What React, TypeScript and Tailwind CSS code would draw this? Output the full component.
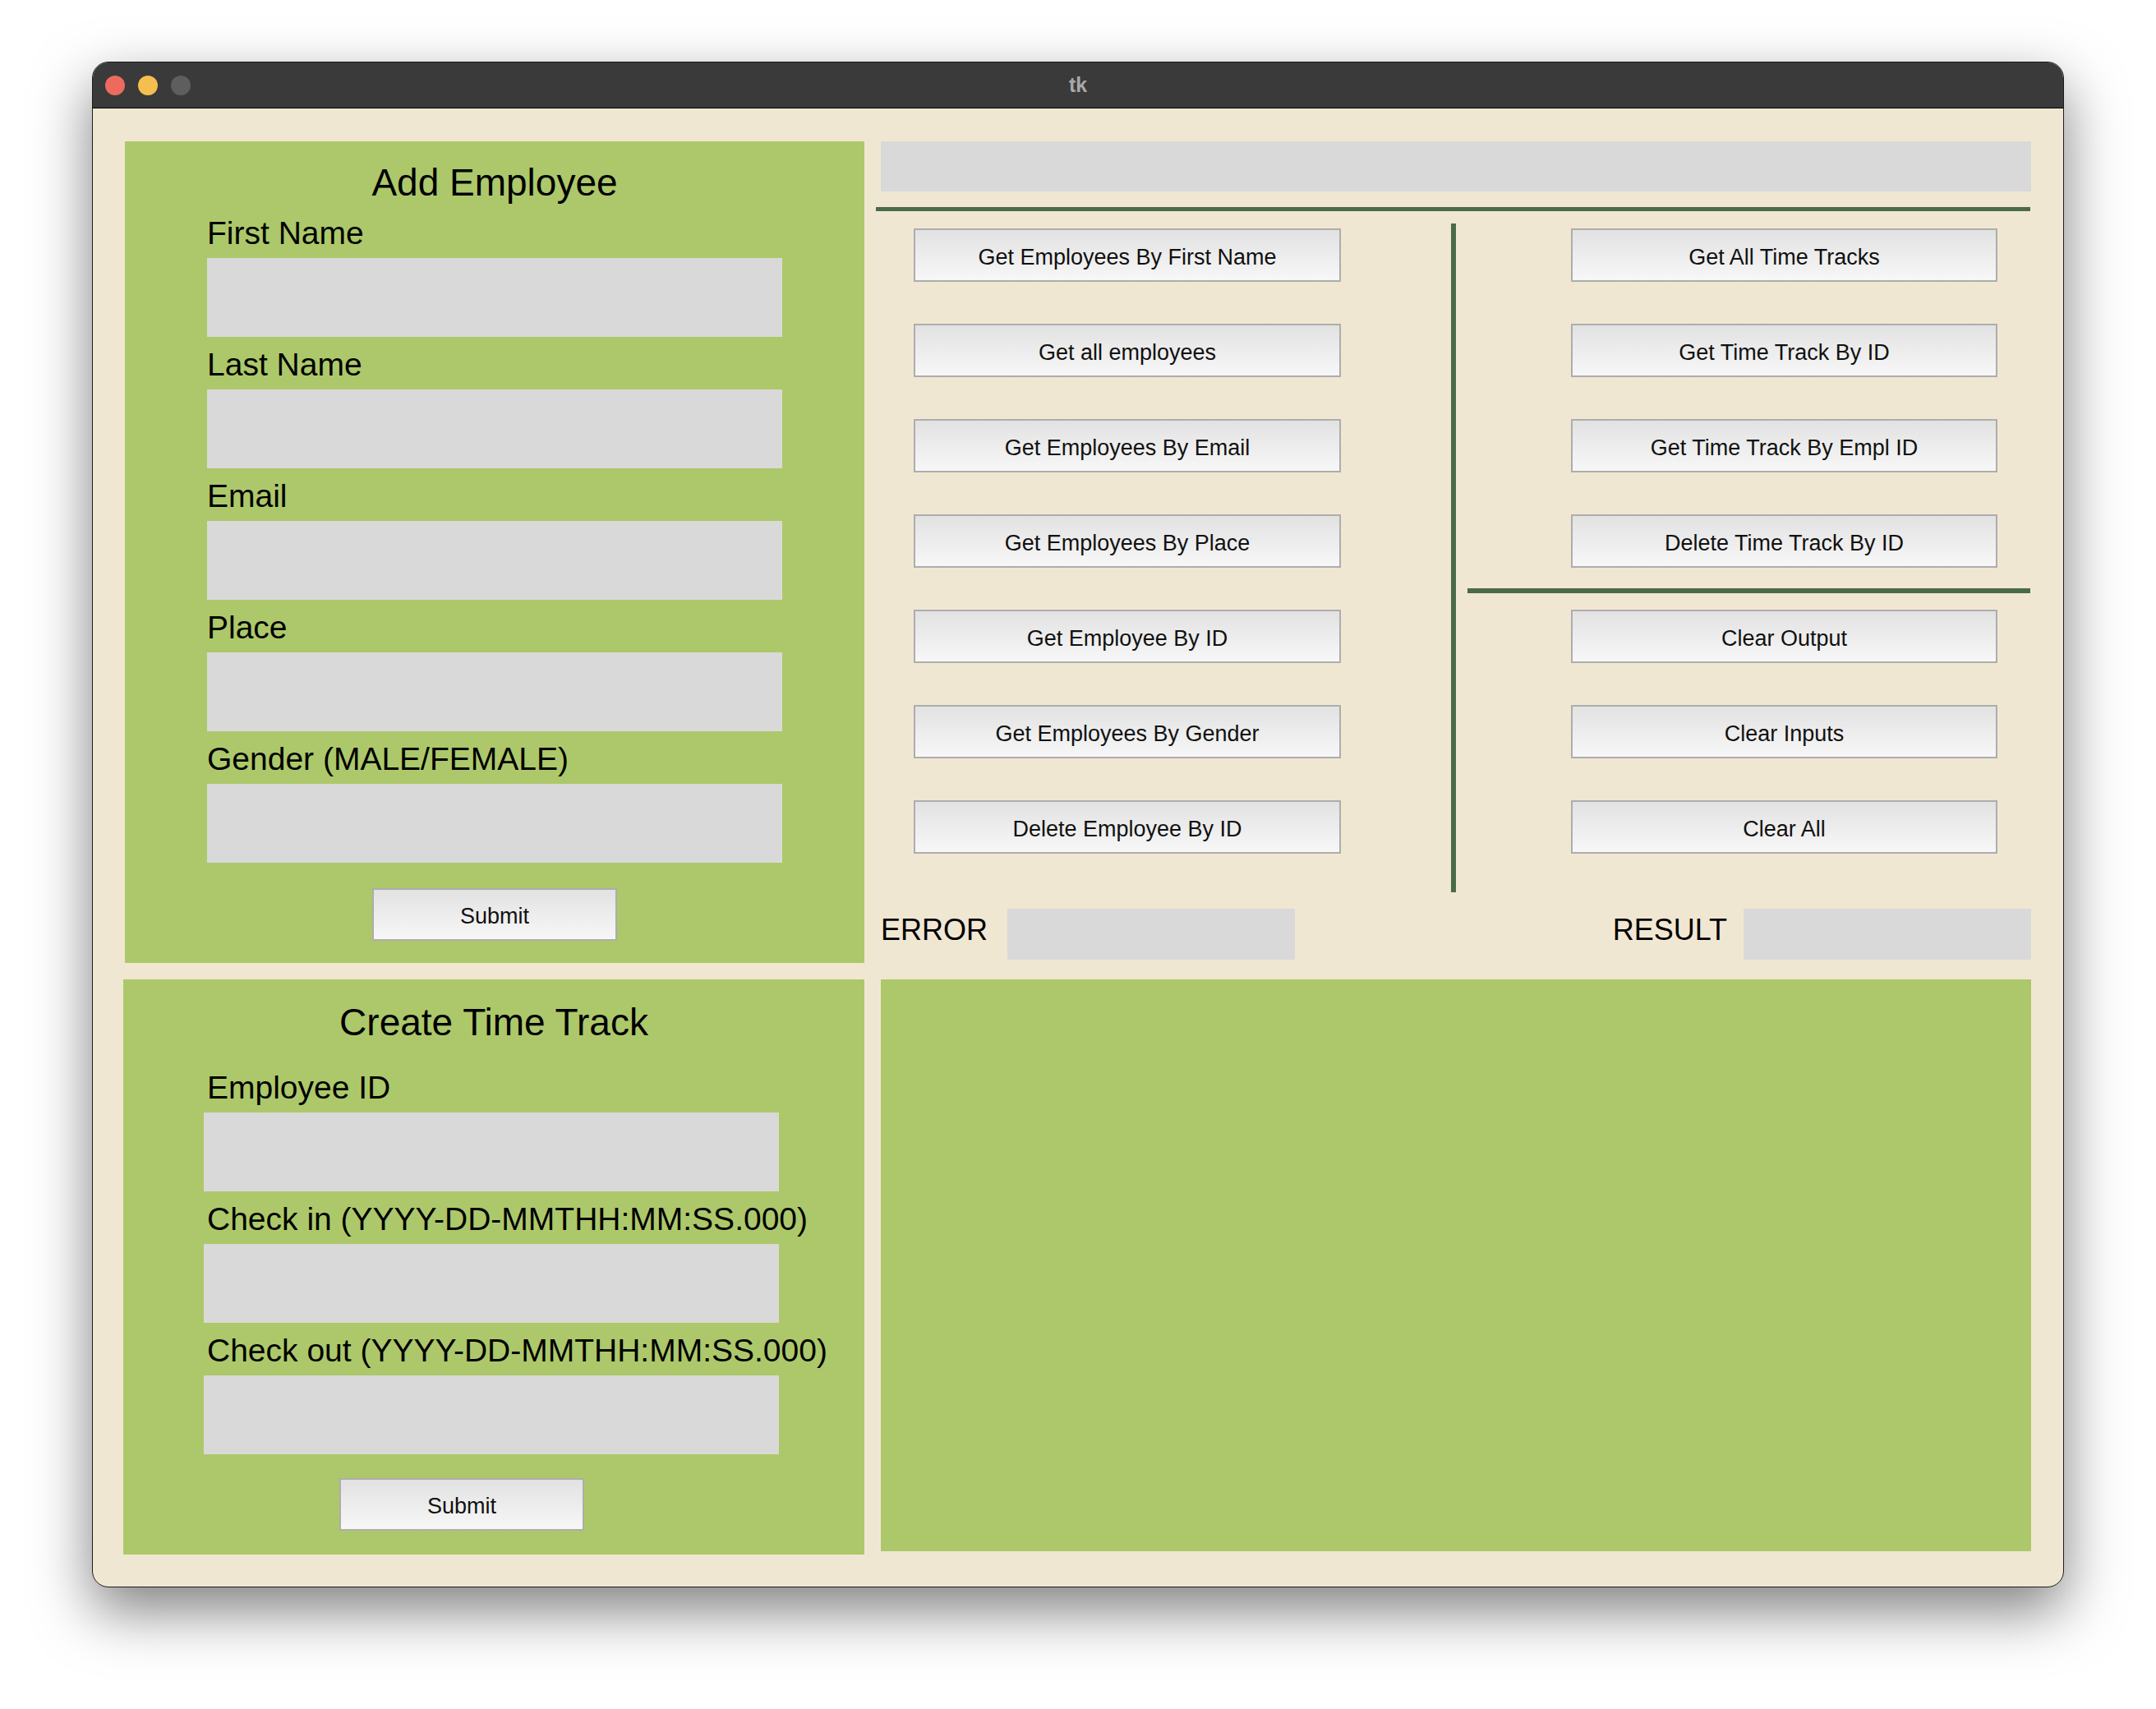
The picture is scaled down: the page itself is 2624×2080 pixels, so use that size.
import React from "react";

const FONT = { fontFamily: '"Liberation Sans", Arial, sans-serif' };

function TkButton({ label, className }: { label: string; className: string }) {
  return (
    <div
      className={`flex items-center justify-center pt-[5px] border-2 border-[#ADADAD] bg-linear-to-b from-[#E2E2E2] to-[#F7F7F7] text-[27px] leading-none text-[#111] whitespace-nowrap ${className}`}
    >
      {label}
    </div>
  );
}

function Field({ label, pl, inputMl }: { label: string; pl: string; inputMl: string }) {
  return (
    <div className="flex flex-col">
      <div className={`h-[64px] pt-[14px] text-[39px] leading-none text-black whitespace-nowrap ${pl}`}>{label}</div>
      <div className={`h-[96px] w-[700px] bg-[#D9D9D9] ${inputMl}`} />
    </div>
  );
}

export default function App() {
  const leftButtons = [
    "Get Employees By First Name",
    "Get all employees",
    "Get Employees By Email",
    "Get Employees By Place",
    "Get Employee By ID",
    "Get Employees By Gender",
    "Delete Employee By ID",
  ];
  const rightTop = ["Get All Time Tracks", "Get Time Track By ID", "Get Time Track By Empl ID", "Delete Time Track By ID"];
  const rightBottom = ["Clear Output", "Clear Inputs", "Clear All"];

  return (
    <div className="w-[2624px] h-[2080px] bg-white pt-[75px] pl-[112px]" style={FONT}>
      <div className="w-[2400px] h-[1857px] rounded-[20px] overflow-hidden border border-[#1c1c1c] shadow-[0_28px_70px_rgba(0,0,0,0.5)] flex flex-col bg-[#F0E7D3]">
        {/* title bar */}
        <div className="relative h-[56px] shrink-0 bg-[#3A3A3A] border-b border-black flex items-center pl-[15px] gap-[16px]">
          <div className="w-[24px] h-[24px] rounded-full bg-[#EE6A5F]" />
          <div className="w-[24px] h-[24px] rounded-full bg-[#F5BF4F]" />
          <div className="w-[24px] h-[24px] rounded-full bg-[#5E5E5E]" />
          <div className="absolute inset-0 flex items-center justify-center pointer-events-none">
            <span className="text-[25px] font-bold text-[#A8A8A8] leading-none">tk</span>
          </div>
        </div>

        {/* content */}
        <div className="flex-1 flex flex-row pl-[37px]">
          {/* left column */}
          <div className="w-[902px] flex flex-col pt-[40px]">
            {/* Add Employee */}
            <div className="ml-[2px] w-[900px] h-[1000px] bg-[#ADC86A] flex flex-col">
              <div className="h-[78px] pt-[27px] text-[46px] leading-none text-center text-black">Add Employee</div>
              <Field label="First Name" pl="pl-[100px]" inputMl="ml-[100px]" />
              <Field label="Last Name" pl="pl-[100px]" inputMl="ml-[100px]" />
              <Field label="Email" pl="pl-[100px]" inputMl="ml-[100px]" />
              <Field label="Place" pl="pl-[100px]" inputMl="ml-[100px]" />
              <Field label="Gender (MALE/FEMALE)" pl="pl-[100px]" inputMl="ml-[100px]" />
              <TkButton label="Submit" className="mt-[31px] mx-auto w-[298px] h-[64px]" />
            </div>
            {/* Create Time Track */}
            <div className="mt-[20px] w-[902px] h-[700px] bg-[#ADC86A] flex flex-col">
              <div className="h-[98px] pt-[29px] text-[46px] leading-none text-center text-black">Create Time Track</div>
              <Field label="Employee ID" pl="pl-[102px]" inputMl="ml-[98px]" />
              <Field label="Check in (YYYY-DD-MMTHH:MM:SS.000)" pl="pl-[102px]" inputMl="ml-[98px]" />
              <Field label="Check out (YYYY-DD-MMTHH:MM:SS.000)" pl="pl-[102px]" inputMl="ml-[98px]" />
              <TkButton label="Submit" className="mt-[29px] ml-[263px] w-[298px] h-[64px]" />
            </div>
          </div>

          {/* right column */}
          <div className="ml-[20px] w-[1400px] flex flex-col pt-[40px]">
            <div className="h-[61px] bg-[#D9D9D9]" />
            <div className="mt-[19px] -ml-[6px] w-[1405px] h-[5px] bg-[#4A6B47]" />
            <div className="h-[829px] flex flex-row">
              <div className="w-[694px] flex flex-col pt-[21px] pl-[40px] gap-[51px]">
                {leftButtons.map((b) => (
                  <TkButton key={b} label={b} className="w-[520px] h-[65px]" />
                ))}
              </div>
              <div className="w-[6px] mt-[15px] h-[814px] bg-[#4A6B47]" />
              <div className="flex-1 flex flex-col pt-[21px]">
                <div className="flex flex-col gap-[51px] pl-[140px]">
                  {rightTop.map((b) => (
                    <TkButton key={b} label={b} className="w-[519px] h-[65px]" />
                  ))}
                </div>
                <div className="mt-[25px] ml-[14px] w-[685px] h-[6px] bg-[#4A6B47]" />
                <div className="mt-[20px] flex flex-col gap-[51px] pl-[140px]">
                  {rightBottom.map((b) => (
                    <TkButton key={b} label={b} className="w-[519px] h-[65px]" />
                  ))}
                </div>
              </div>
            </div>
            {/* error / result row */}
            <div className="mt-[20px] h-[62px] flex flex-row">
              <div className="w-[154px] pt-[8px] text-[36px] leading-none text-black">ERROR</div>
              <div className="w-[350px] h-[62px] bg-[#D9D9D9]" />
              <div className="flex-1" />
              <div className="mr-[20px] pt-[8px] text-[36px] leading-none text-black">RESULT</div>
              <div className="w-[350px] h-[62px] bg-[#D9D9D9]" />
            </div>
            <div className="mt-[24px] h-[696px] bg-[#ADC86A]" />
          </div>
        </div>
      </div>
    </div>
  );
}
